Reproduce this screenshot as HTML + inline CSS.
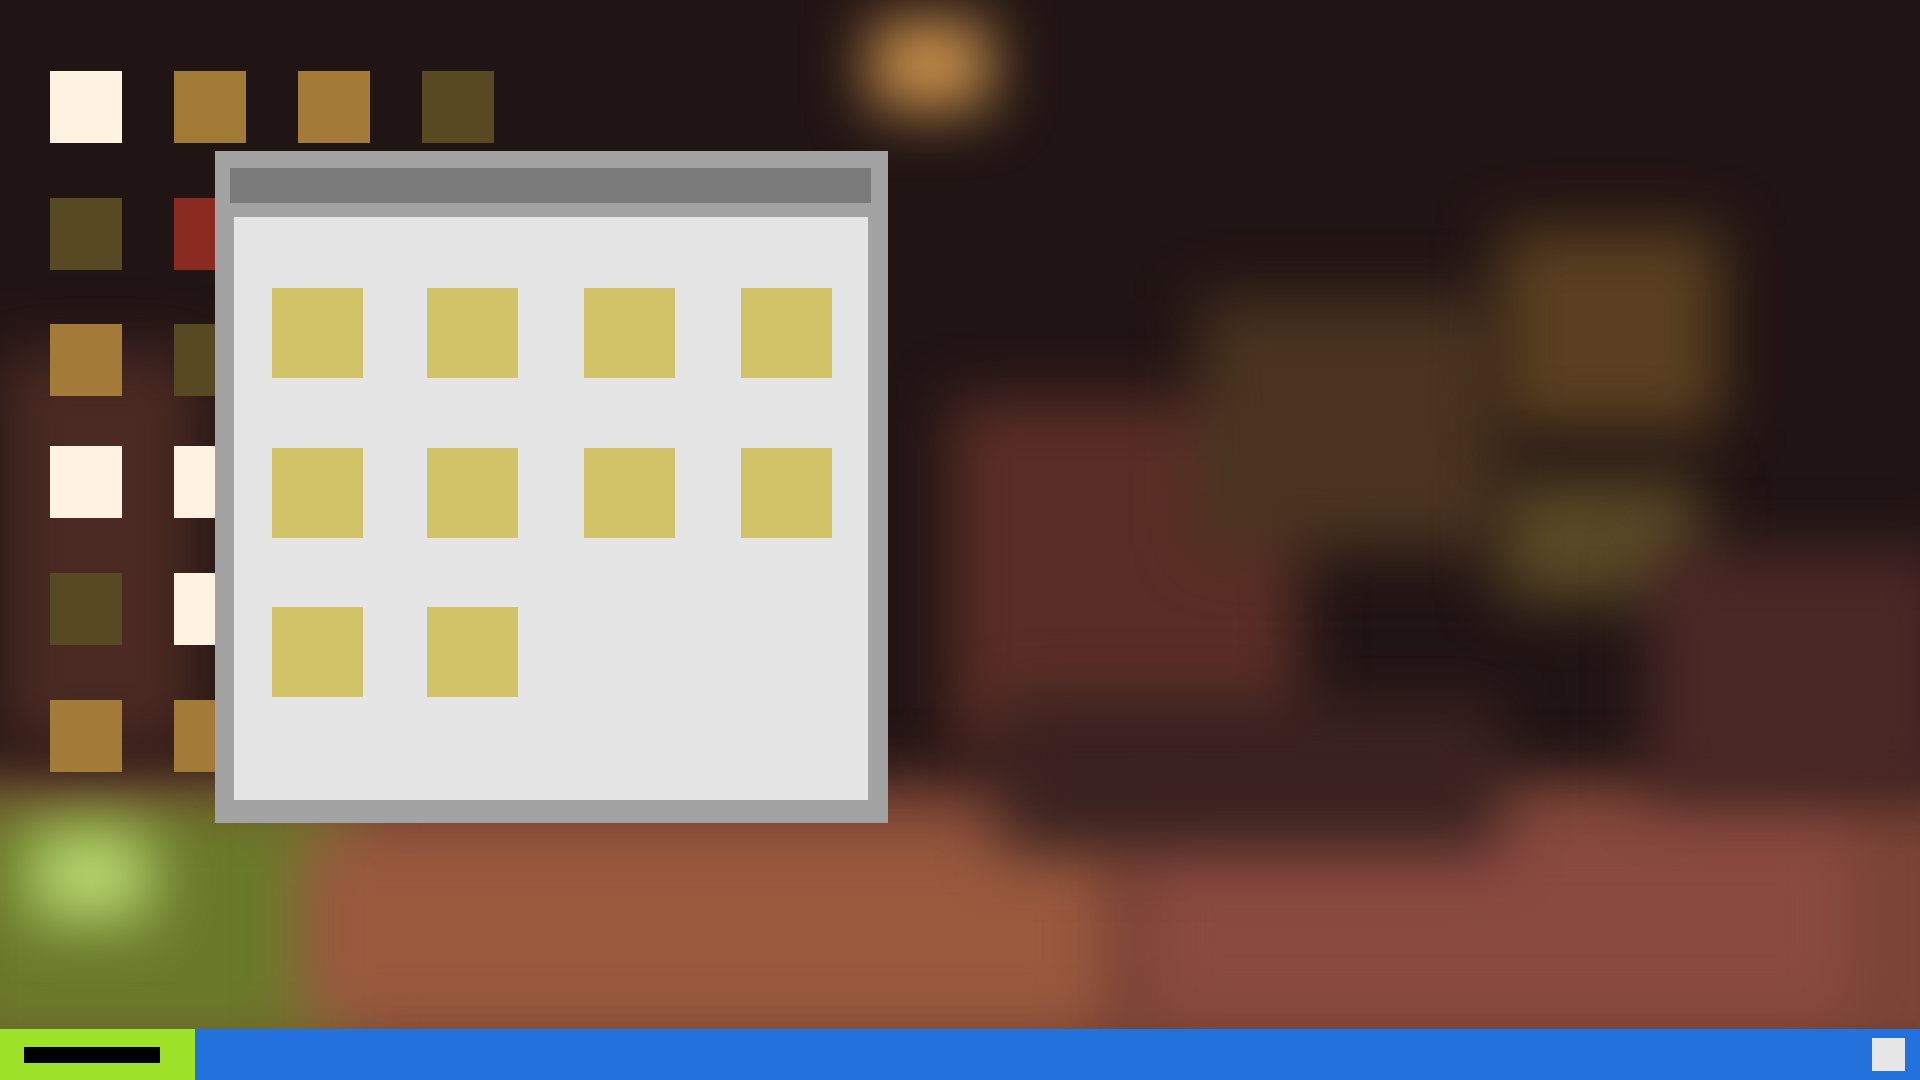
<!DOCTYPE html>
<html><head><meta charset="utf-8"><style>
html,body{margin:0;padding:0;width:1920px;height:1080px;overflow:hidden;}
body{position:relative;background:#211414;font-family:"Liberation Sans",sans-serif;}
.bg{position:absolute;inset:0;overflow:hidden;}
.b{position:absolute;filter:blur(30px);}
.d{position:absolute;width:72px;height:72px;}
.w{position:absolute;left:215px;top:151px;width:673px;height:672px;background:#a3a3a3;}
.t{position:absolute;left:15px;top:17px;width:641px;height:35px;background:#7a7a7a;}
.c{position:absolute;left:19px;top:66px;width:634px;height:583px;background:#e5e5e5;}
.i{position:absolute;width:91px;height:90px;background:#d3c368;}
.tb{position:absolute;left:0;top:1029px;width:1920px;height:51px;background:#2271dd;}
.st{position:absolute;left:0;top:0;width:195px;height:51px;background:#9ee22a;}
.sb{position:absolute;left:24px;top:18px;width:136px;height:16px;background:#000;}
.sq{position:absolute;left:1872px;top:9px;width:33px;height:33px;background:#e6e6e6;}
</style></head><body>
<div class="bg">
<div class="b" style="left:-100px;top:780px;width:2100px;height:300px;background:#7a4436;"></div>
<div class="b" style="left:-50px;top:800px;width:400px;height:250px;background:#6a7a2a;"></div>
<div class="b" style="left:30px;top:830px;width:120px;height:90px;background:#b8d870;"></div>
<div class="b" style="left:300px;top:830px;width:800px;height:200px;background:#9a5a3e;"></div>
<div class="b" style="left:1150px;top:820px;width:700px;height:200px;background:#8a4a40;"></div>
<div class="b" style="left:870px;top:20px;width:120px;height:90px;background:#c8904a;"></div>
<div class="b" style="left:950px;top:400px;width:350px;height:350px;background:#5a2e26;"></div>
<div class="b" style="left:1200px;top:300px;width:300px;height:250px;background:#4a3420;"></div>
<div class="b" style="left:1500px;top:230px;width:220px;height:200px;background:#5a4020;"></div>
<div class="b" style="left:1500px;top:480px;width:200px;height:120px;background:#5a4a26;"></div>
<div class="b" style="left:0;top:350px;width:200px;height:400px;background:#4a2a22;"></div>
<div class="b" style="left:1650px;top:550px;width:300px;height:250px;background:#4a2826;"></div>
<div class="b" style="left:1000px;top:700px;width:500px;height:150px;background:#3a2220;"></div>
</div>
<div class="d" style="left:50px;top:71px;background:#fdf3e0"></div>
<div class="d" style="left:174px;top:71px;background:#a17a35"></div>
<div class="d" style="left:298px;top:71px;background:#a37a37"></div>
<div class="d" style="left:422px;top:71px;background:#574a22"></div>
<div class="d" style="left:50px;top:198px;background:#574a22"></div>
<div class="d" style="left:174px;top:198px;background:#8b2a20"></div>
<div class="d" style="left:50px;top:324px;background:#a37a37"></div>
<div class="d" style="left:174px;top:324px;background:#574a22"></div>
<div class="d" style="left:50px;top:446px;background:#fdf3e0"></div>
<div class="d" style="left:174px;top:446px;background:#fdf3e0"></div>
<div class="d" style="left:50px;top:573px;background:#574a22"></div>
<div class="d" style="left:174px;top:573px;background:#fdf3e0"></div>
<div class="d" style="left:50px;top:700px;background:#a37a37"></div>
<div class="d" style="left:174px;top:700px;background:#a37a37"></div>
<div class="w"><div class="t"></div><div class="c">
<div class="i" style="left:38px;top:71px"></div>
<div class="i" style="left:193px;top:71px"></div>
<div class="i" style="left:350px;top:71px"></div>
<div class="i" style="left:507px;top:71px"></div>
<div class="i" style="left:38px;top:231px"></div>
<div class="i" style="left:193px;top:231px"></div>
<div class="i" style="left:350px;top:231px"></div>
<div class="i" style="left:507px;top:231px"></div>
<div class="i" style="left:38px;top:390px"></div>
<div class="i" style="left:193px;top:390px"></div>
</div></div>
<div class="tb"><div class="st"><div class="sb"></div></div><div class="sq"></div></div>
</body></html>
